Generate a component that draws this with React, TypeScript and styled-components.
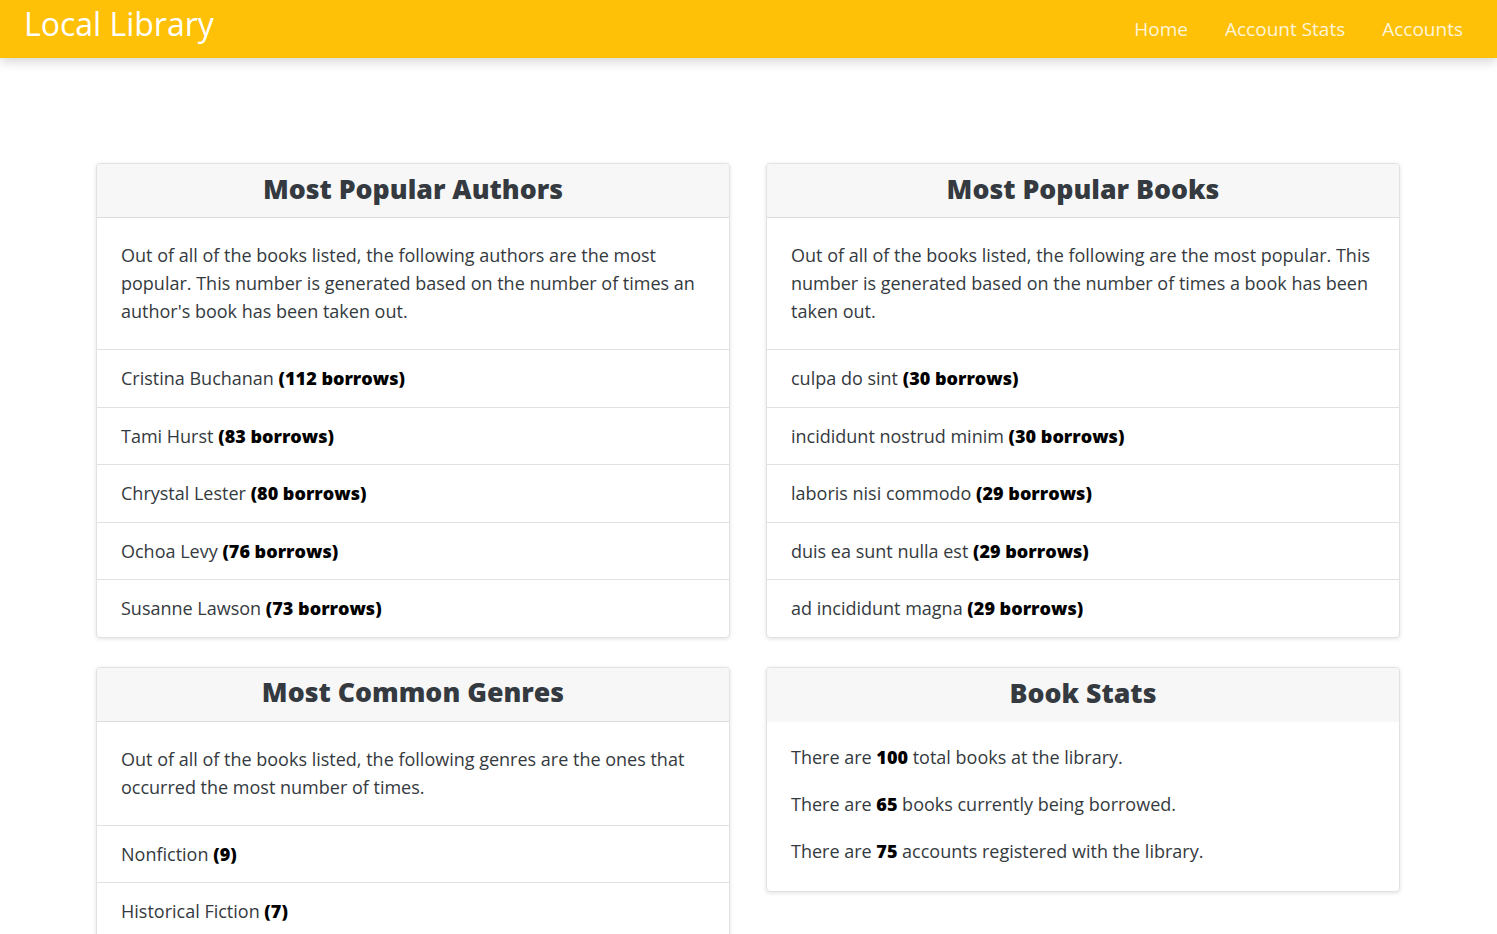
import React from "react";
import styled, { createGlobalStyle } from "styled-components";

const Global = createGlobalStyle`
  html, body { margin: 0; padding: 0; background: #fff; }
  body { font-family: "Open Sans", "Noto Sans", sans-serif; color: #343a40; }
  * { box-sizing: border-box; }
`;

const NavBar = styled.nav`
  height: 58px;
  background: #ffc107;
  display: flex;
  align-items: center;
  justify-content: space-between;
  padding: 0 34px 0 24px;
  box-shadow: 0 4px 10px rgba(0, 0, 0, 0.16);
  position: relative;
`;

const Brand = styled.a`
  color: #fff;
  font-size: 32px;
  line-height: 1;
  text-decoration: none;
  margin-top: -11px;
`;

const NavLinks = styled.div`
  display: flex;
  gap: 37px;
  margin-top: -1px;
`;

const NavLink = styled.a`
  color: rgba(255, 255, 255, 0.85);
  font-size: 19px;
  text-decoration: none;
`;

const Main = styled.main`
  width: 1304px;
  margin: 105px 0 0 96px;
  display: grid;
  grid-template-columns: 634px 634px;
  column-gap: 36px;
  row-gap: 29px;
  align-items: start;
`;

const Card = styled.section`
  border: 1px solid #e2e2e2;
  border-radius: 4px;
  box-shadow: 0 1px 4px rgba(0, 0, 0, 0.12);
  background: #fff;
  overflow: hidden;
`;

const CardHeader = styled.h2<{ $bordered?: boolean }>`
  margin: 0;
  height: 54px;
  padding-bottom: 5px;
  background: #f7f7f7;
  border-bottom: ${(p) => (p.$bordered ? "1px solid #dcdcdc" : "none")};
  display: flex;
  align-items: center;
  justify-content: center;
  font-size: 26.7px;
  font-weight: 800;
  color: #343a40;
`;

const Intro = styled.p`
  margin: 0;
  padding: 23px 24px 24px;
  font-size: 18px;
  line-height: 28px;
  border-bottom: 1px solid #e2e2e2;
`;

const List = styled.ul`
  list-style: none;
  margin: 0;
  padding: 0;
`;

const Item = styled.li`
  padding: 15px 24px;
  font-size: 18px;
  line-height: 26.5px;
  border-bottom: 1px solid #e2e2e2;
  &:last-child { border-bottom: none; }
  b { color: #000; font-weight: 800; }
`;

const StatsBody = styled.div`
  padding: 21px 24px 26px;
  display: flex;
  flex-direction: column;
  gap: 19px;
`;

const Stat = styled.p`
  margin: 0;
  font-size: 18px;
  line-height: 28px;
  b { color: #000; font-weight: 800; }
`;

const authors = [
  ["Cristina Buchanan", 112],
  ["Tami Hurst", 83],
  ["Chrystal Lester", 80],
  ["Ochoa Levy", 76],
  ["Susanne Lawson", 73],
] as const;

const books = [
  ["culpa do sint", 30],
  ["incididunt nostrud minim", 30],
  ["laboris nisi commodo", 29],
  ["duis ea sunt nulla est", 29],
  ["ad incididunt magna", 29],
] as const;

const genres = [
  ["Nonfiction", 9],
  ["Historical Fiction", 7],
  ["Thriller", 7],
  ["Science", 6],
  ["Poetry", 5],
] as const;

export default function App() {
  return (
    <>
      <Global />
      <NavBar>
        <Brand href="#">Local Library</Brand>
        <NavLinks>
          <NavLink href="#">Home</NavLink>
          <NavLink href="#">Account Stats</NavLink>
          <NavLink href="#">Accounts</NavLink>
        </NavLinks>
      </NavBar>
      <Main>
        <Card>
          <CardHeader $bordered>Most Popular Authors</CardHeader>
          <Intro>
            Out of all of the books listed, the following authors are the most
            popular. This number is generated based on the number of times an
            author's book has been taken out.
          </Intro>
          <List>
            {authors.map(([n, c]) => (
              <Item key={n}>
                {n} <b>({c} borrows)</b>
              </Item>
            ))}
          </List>
        </Card>
        <Card>
          <CardHeader $bordered>Most Popular Books</CardHeader>
          <Intro>
            Out of all of the books listed, the following are the most popular.
            This number is generated based on the number of times a book has
            been taken out.
          </Intro>
          <List>
            {books.map(([n, c]) => (
              <Item key={n}>
                {n} <b>({c} borrows)</b>
              </Item>
            ))}
          </List>
        </Card>
        <Card>
          <CardHeader $bordered>Most Common Genres</CardHeader>
          <Intro>
            Out of all of the books listed, the following genres are the ones
            that occurred the most number of times.
          </Intro>
          <List>
            {genres.map(([n, c]) => (
              <Item key={n}>
                {n} <b>({c})</b>
              </Item>
            ))}
          </List>
        </Card>
        <Card>
          <CardHeader>Book Stats</CardHeader>
          <StatsBody>
            <Stat>
              There are <b>100</b> total books at the library.
            </Stat>
            <Stat>
              There are <b>65</b> books currently being borrowed.
            </Stat>
            <Stat>
              There are <b>75</b> accounts registered with the library.
            </Stat>
          </StatsBody>
        </Card>
      </Main>
    </>
  );
}
